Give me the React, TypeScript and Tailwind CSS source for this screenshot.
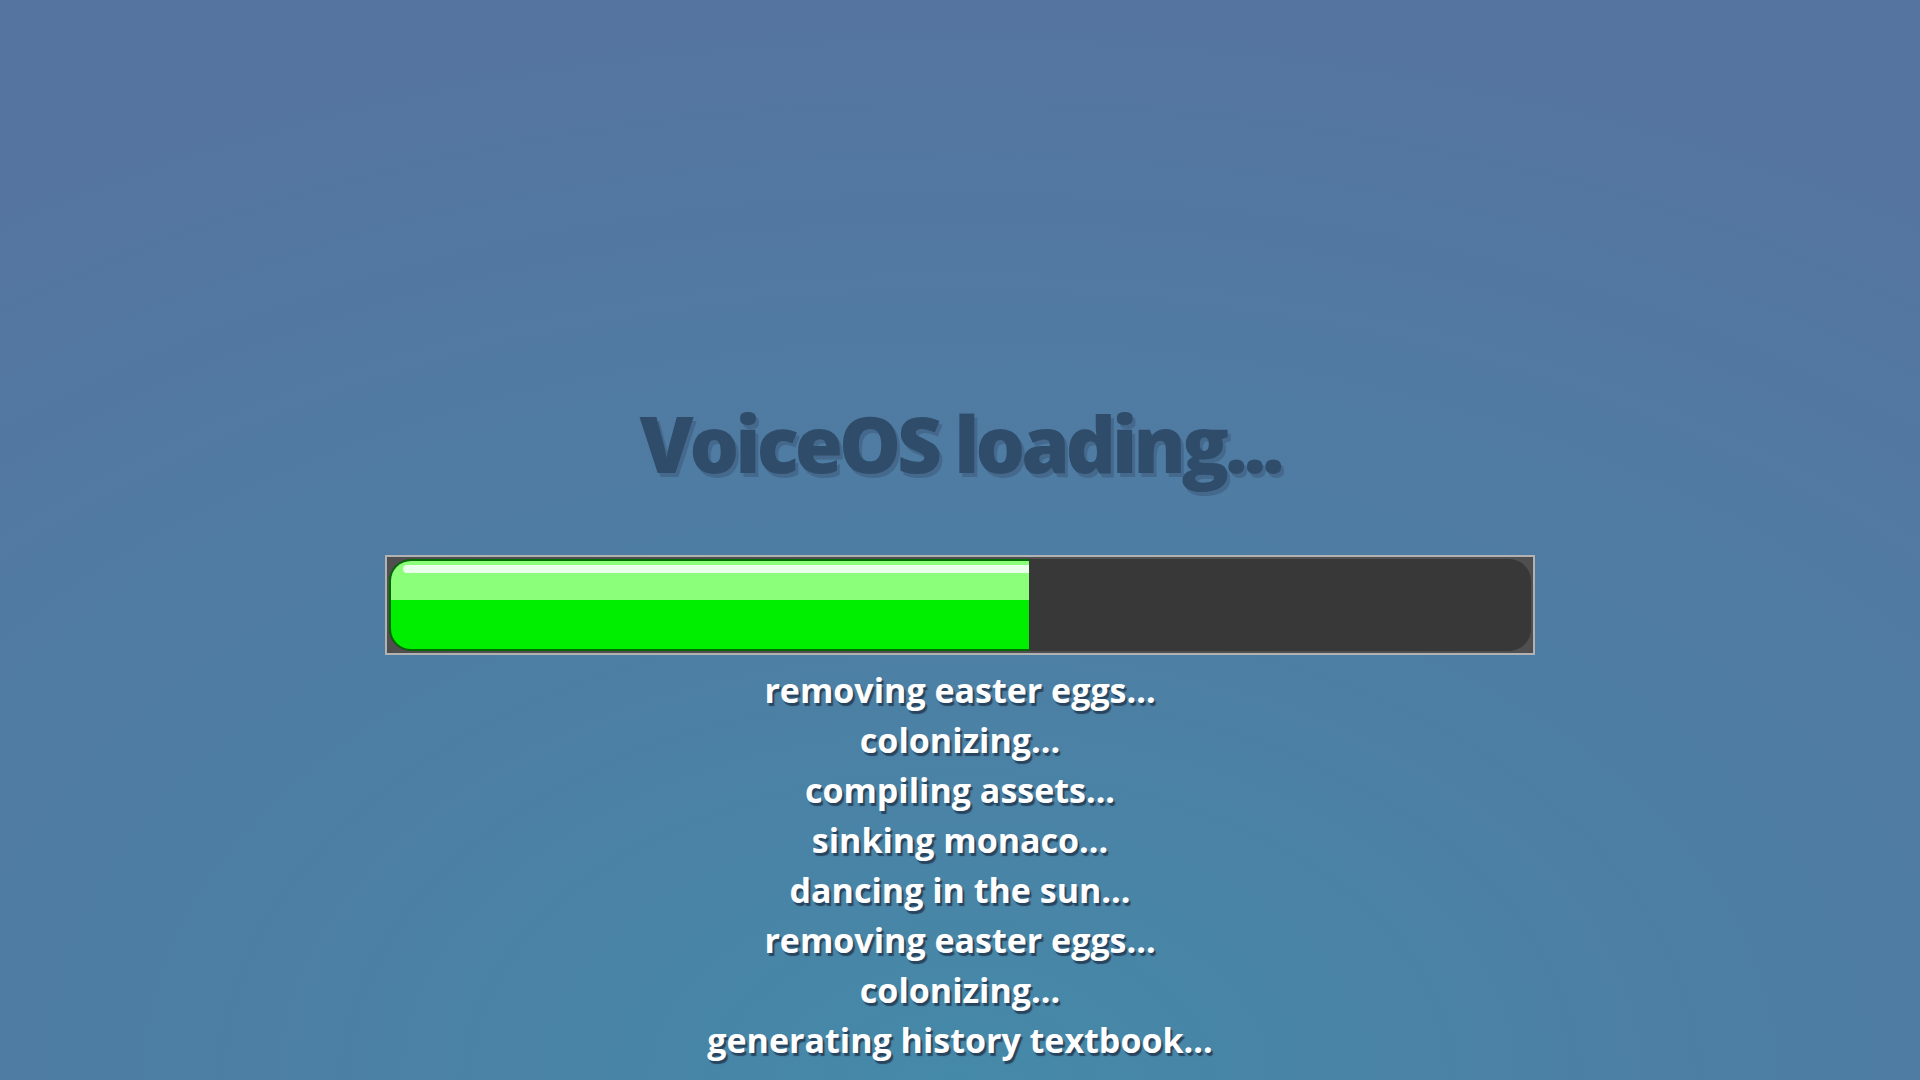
import React from "react";

const lines = [
  "removing easter eggs...",
  "colonizing...",
  "compiling assets...",
  "sinking monaco...",
  "dancing in the sun...",
  "removing easter eggs...",
  "colonizing...",
  "generating history textbook...",
];

export default function App() {
  return (
    <div className="w-[1920px] h-[1080px] overflow-hidden bg-[radial-gradient(ellipse_90%_100%_at_50%_100%,#4589a8_0%,#4d7ea3_45%,#5575a0_100%)] font-['Open_Sans','Noto_Sans',sans-serif]">
      <div className="flex flex-col items-center pt-[393px]">
        <h1 className="text-[78px] leading-[100px] font-extrabold text-[#2f4d6a] tracking-[-4px] [text-shadow:3px_4px_0_#45698c]">
          VoiceOS loading...
        </h1>
        <div className="mt-[62px] w-[1150px] h-[100px] border-2 border-[#b2b2b2] bg-[#4f4f4f] p-[2px]">
          <div className="h-full w-full rounded-[22px] bg-[#383838] overflow-hidden flex">
            <div className="relative h-full w-[640px] rounded-l-[22px] border-2 border-r-0 border-[#006c00] overflow-hidden flex flex-col">
              <div className="h-[39px] bg-[#8cff7a]" />
              <div className="flex-1 bg-[#00ee00]" />
              <div className="absolute left-[12px] right-0 top-[4px] h-[8px] rounded-l-full bg-[#eaffea]" />
            </div>
          </div>
        </div>
        <div className="mt-[10px] flex flex-col items-center">
          {lines.map((l, i) => (
            <div
              key={i}
              className="text-[34px] leading-[50px] font-bold text-white [text-shadow:2px_3px_1px_#284560]"
            >
              {l}
            </div>
          ))}
        </div>
      </div>
    </div>
  );
}
